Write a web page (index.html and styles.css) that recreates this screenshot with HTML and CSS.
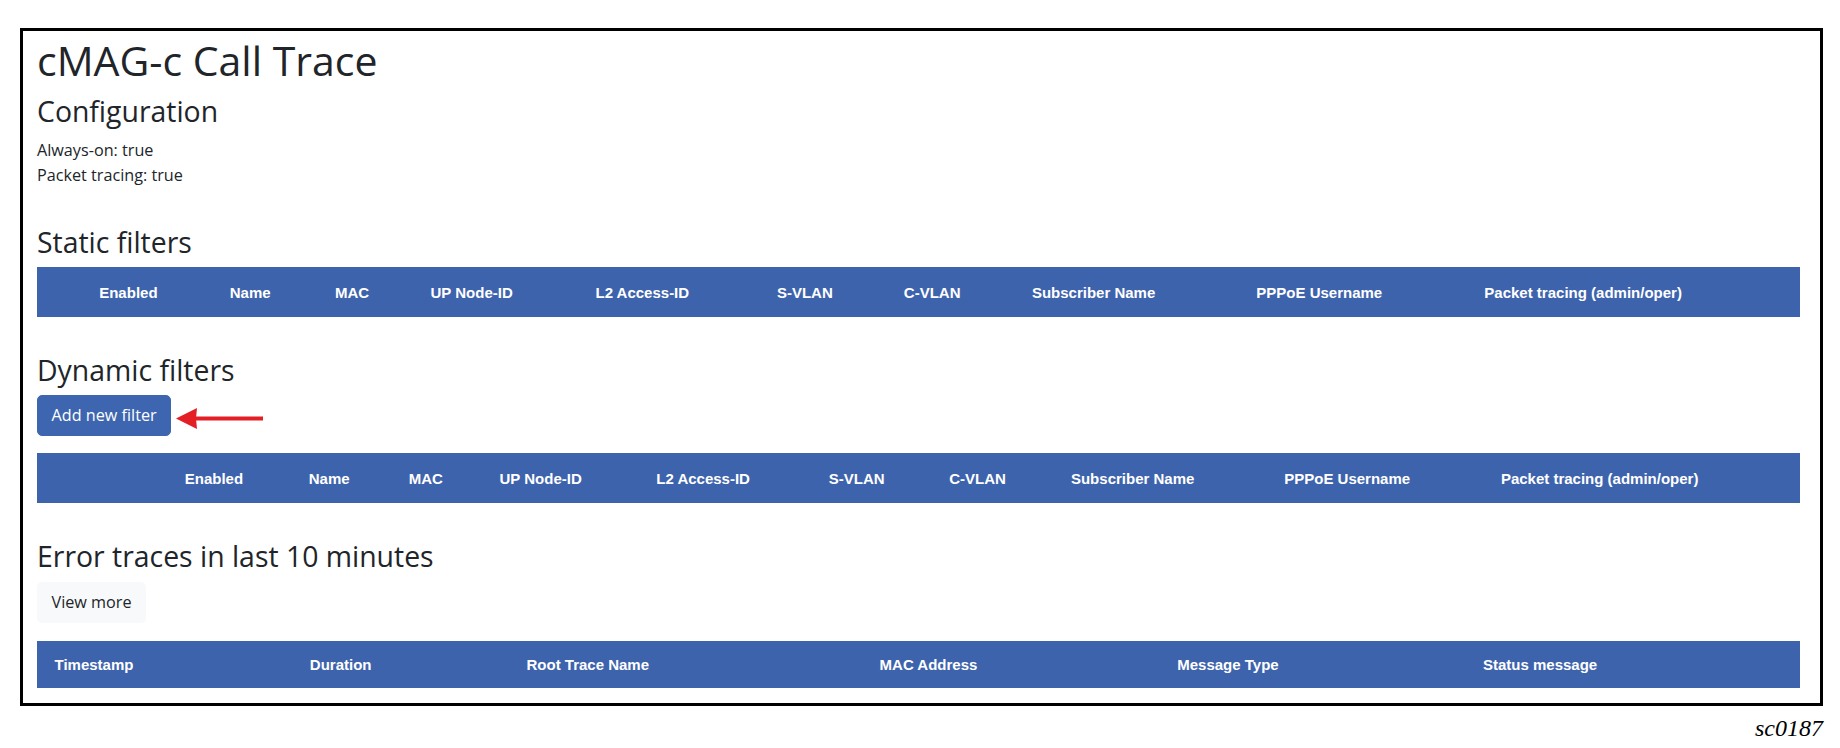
FILE: index.html
```html
<!DOCTYPE html>
<html lang="en">
<head>
<meta charset="utf-8">
<title>cMAG-c Call Trace</title>
<link rel="stylesheet" href="styles.css">
</head>
<body>
<div class="page">
  <div class="frame">
    <h1 class="title">cMAG-c Call Trace</h1>

    <h2 class="section-title cfg-title">Configuration</h2>
    <div class="kv">
      <p>Always-on: true</p>
      <p>Packet tracing: true</p>
    </div>

    <h2 class="section-title static-title">Static filters</h2>
    <table class="grid grid-static">
      <thead>
        <tr>
          <th class="gutter"></th>
          <th>Enabled</th>
          <th>Name</th>
          <th>MAC</th>
          <th>UP Node-ID</th>
          <th>L2 Access-ID</th>
          <th>S-VLAN</th>
          <th>C-VLAN</th>
          <th>Subscriber Name</th>
          <th>PPPoE Username</th>
          <th>Packet tracing (admin/oper)</th>
        </tr>
      </thead>
    </table>

    <h2 class="section-title block-title">Dynamic filters</h2>
    <div class="btn-row">
      <button class="btn btn-primary" type="button">Add new filter</button>
      <svg class="callout-arrow" width="88" height="22" viewBox="0 0 88 22" aria-hidden="true">
        <polygon points="0,10.5 21,0 20,10.5 21,21" fill="#e31e25"/>
        <rect x="18" y="8.5" width="69" height="4" fill="#e31e25"/>
      </svg>
    </div>
    <table class="grid grid-dynamic">
      <thead>
        <tr>
          <th class="gutter"><span class="spacer"></span></th>
          <th>Enabled</th>
          <th>Name</th>
          <th>MAC</th>
          <th>UP Node-ID</th>
          <th>L2 Access-ID</th>
          <th>S-VLAN</th>
          <th>C-VLAN</th>
          <th>Subscriber Name</th>
          <th>PPPoE Username</th>
          <th>Packet tracing (admin/oper)</th>
        </tr>
      </thead>
    </table>

    <h2 class="section-title block-title">Error traces in last 10 minutes</h2>
    <button class="btn btn-light" type="button">View more</button>
    <table class="grid grid-errors">
      <thead>
        <tr>
          <th>Timestamp</th>
          <th>Duration</th>
          <th>Root Trace Name</th>
          <th>MAC Address</th>
          <th>Message Type</th>
          <th>Status message</th>
        </tr>
      </thead>
    </table>
  </div>
  <div class="caption">sc0187</div>
</div>
</body>
</html>
```

FILE: styles.css
```css
html, body {
  margin: 0;
  padding: 0;
  background: #ffffff;
}

body {
  font-family: "Open Sans", "Noto Sans", sans-serif;
  color: #212529;
}

.page {
  padding: 28px 0 0 20px;
}

.frame {
  box-sizing: border-box;
  width: 1803px;
  border: 3px solid #000000;
  padding: 4px 20px 15px 14px;
  background: #ffffff;
}

.title {
  margin: 0;
  font-size: 41px;
  line-height: 50px;
  font-weight: 400;
}

.section-title {
  margin: 0;
  font-size: 28.4px;
  line-height: 34px;
  font-weight: 400;
}

.cfg-title {
  margin-top: 9px;
}

.kv {
  margin-top: 10px;
}

.kv p {
  margin: 0;
  font-size: 16.2px;
  line-height: 25px;
}

.static-title {
  margin-top: 37px;
}

.block-title {
  margin-top: 36px;
}

.grid {
  width: 100%;
  border-collapse: collapse;
  border-spacing: 0;
  background: #3e63ad;
  color: #ffffff;
  font-family: "Liberation Sans", Arial, sans-serif;
  font-size: 15px;
  font-weight: 700;
}

.grid th {
  height: 50px;
  padding: 0 16px;
  text-align: left;
  vertical-align: middle;
  white-space: nowrap;
  font-weight: 700;
}

.grid-static {
  margin-top: 8px;
}

.grid-dynamic {
  margin-top: 17px;
}

.grid-errors {
  margin-top: 18px;
}

.grid-errors th {
  height: 47px;
  padding: 0 17.5px;
}

.spacer {
  display: inline-block;
  width: 64px;
  height: 1px;
}

.btn-row {
  display: flex;
  align-items: center;
  gap: 5px;
  margin-top: 8px;
}

.btn {
  display: inline-block;
  box-sizing: border-box;
  height: 41px;
  padding: 7px 13.5px;
  border: 1px solid transparent;
  border-radius: 5px;
  font-family: "Open Sans", "Noto Sans", sans-serif;
  font-size: 16.2px;
  line-height: 25px;
  cursor: pointer;
}

.btn-primary {
  background: #3e66b0;
  border-color: #3e66b0;
  color: #ffffff;
}

.btn-light {
  margin-top: 9px;
  background: #f8f9fa;
  border-color: #f8f9fa;
  color: #212529;
}

.callout-arrow {
  display: block;
  margin-top: 6px;
}

.caption {
  width: 1803px;
  margin-top: 10px;
  text-align: right;
  font-family: "Liberation Serif", "Times New Roman", serif;
  font-style: italic;
  font-size: 24px;
  line-height: 24px;
  color: #000000;
}
```
